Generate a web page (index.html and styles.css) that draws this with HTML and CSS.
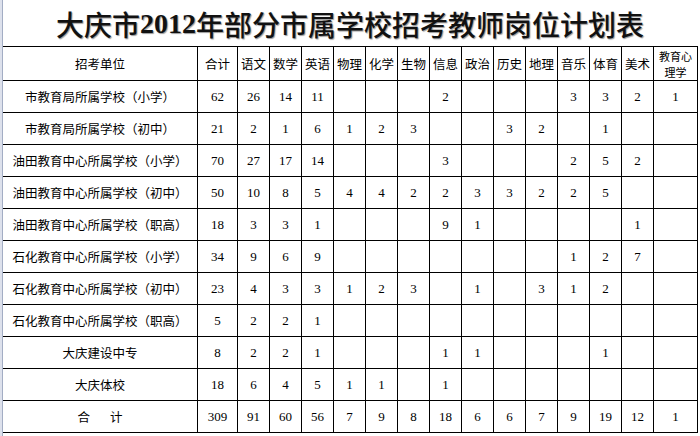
FILE: index.html
```html
<!DOCTYPE html>
<html lang="zh-CN">
<head>
<meta charset="utf-8">
<title>大庆市2012年部分市属学校招考教师岗位计划表</title>
<link rel="stylesheet" href="styles.css">
</head>
<body>
<div class="page">
  <div class="rowhead"></div>
  <div class="main">
    <h1 class="title">大庆市<span class="digits">2012</span>年部分市属学校招考教师岗位计划表</h1>
    <div class="sheet">
      <div class="c hd">招考单位</div><div class="c hd">合计</div><div class="c hd">语文</div><div class="c hd">数学</div><div class="c hd">英语</div><div class="c hd">物理</div><div class="c hd">化学</div><div class="c hd">生物</div><div class="c hd">信息</div><div class="c hd">政治</div><div class="c hd">历史</div><div class="c hd">地理</div><div class="c hd">音乐</div><div class="c hd">体育</div><div class="c hd">美术</div><div class="c hd two"><span>教育心</span><span>理学</span></div>

      <div class="c lb">市教育局所属学校（小学）</div><div class="c n">62</div><div class="c n">26</div><div class="c n">14</div><div class="c n">11</div><div class="c n"></div><div class="c n"></div><div class="c n"></div><div class="c n">2</div><div class="c n"></div><div class="c n"></div><div class="c n"></div><div class="c n">3</div><div class="c n">3</div><div class="c n">2</div><div class="c n">1</div>

      <div class="c lb">市教育局所属学校（初中）</div><div class="c n">21</div><div class="c n">2</div><div class="c n">1</div><div class="c n">6</div><div class="c n">1</div><div class="c n">2</div><div class="c n">3</div><div class="c n"></div><div class="c n"></div><div class="c n">3</div><div class="c n">2</div><div class="c n"></div><div class="c n">1</div><div class="c n"></div><div class="c n"></div>

      <div class="c lb">油田教育中心所属学校（小学）</div><div class="c n">70</div><div class="c n">27</div><div class="c n">17</div><div class="c n">14</div><div class="c n"></div><div class="c n"></div><div class="c n"></div><div class="c n">3</div><div class="c n"></div><div class="c n"></div><div class="c n"></div><div class="c n">2</div><div class="c n">5</div><div class="c n">2</div><div class="c n"></div>

      <div class="c lb">油田教育中心所属学校（初中）</div><div class="c n">50</div><div class="c n">10</div><div class="c n">8</div><div class="c n">5</div><div class="c n">4</div><div class="c n">4</div><div class="c n">2</div><div class="c n">2</div><div class="c n">3</div><div class="c n">3</div><div class="c n">2</div><div class="c n">2</div><div class="c n">5</div><div class="c n"></div><div class="c n"></div>

      <div class="c lb">油田教育中心所属学校（职高）</div><div class="c n">18</div><div class="c n">3</div><div class="c n">3</div><div class="c n">1</div><div class="c n"></div><div class="c n"></div><div class="c n"></div><div class="c n">9</div><div class="c n">1</div><div class="c n"></div><div class="c n"></div><div class="c n"></div><div class="c n"></div><div class="c n">1</div><div class="c n"></div>

      <div class="c lb">石化教育中心所属学校（小学）</div><div class="c n">34</div><div class="c n">9</div><div class="c n">6</div><div class="c n">9</div><div class="c n"></div><div class="c n"></div><div class="c n"></div><div class="c n"></div><div class="c n"></div><div class="c n"></div><div class="c n"></div><div class="c n">1</div><div class="c n">2</div><div class="c n">7</div><div class="c n"></div>

      <div class="c lb">石化教育中心所属学校（初中）</div><div class="c n">23</div><div class="c n">4</div><div class="c n">3</div><div class="c n">3</div><div class="c n">1</div><div class="c n">2</div><div class="c n">3</div><div class="c n"></div><div class="c n">1</div><div class="c n"></div><div class="c n">3</div><div class="c n">1</div><div class="c n">2</div><div class="c n"></div><div class="c n"></div>

      <div class="c lb">石化教育中心所属学校（职高）</div><div class="c n">5</div><div class="c n">2</div><div class="c n">2</div><div class="c n">1</div><div class="c n"></div><div class="c n"></div><div class="c n"></div><div class="c n"></div><div class="c n"></div><div class="c n"></div><div class="c n"></div><div class="c n"></div><div class="c n"></div><div class="c n"></div><div class="c n"></div>

      <div class="c lb">大庆建设中专</div><div class="c n">8</div><div class="c n">2</div><div class="c n">2</div><div class="c n">1</div><div class="c n"></div><div class="c n"></div><div class="c n"></div><div class="c n">1</div><div class="c n">1</div><div class="c n"></div><div class="c n"></div><div class="c n"></div><div class="c n">1</div><div class="c n"></div><div class="c n"></div>

      <div class="c lb">大庆体校</div><div class="c n">18</div><div class="c n">6</div><div class="c n">4</div><div class="c n">5</div><div class="c n">1</div><div class="c n">1</div><div class="c n"></div><div class="c n">1</div><div class="c n"></div><div class="c n"></div><div class="c n"></div><div class="c n"></div><div class="c n"></div><div class="c n"></div><div class="c n"></div>

      <div class="c lb total"><span>合</span><span>计</span></div><div class="c n">309</div><div class="c n">91</div><div class="c n">60</div><div class="c n">56</div><div class="c n">7</div><div class="c n">9</div><div class="c n">8</div><div class="c n">18</div><div class="c n">6</div><div class="c n">6</div><div class="c n">7</div><div class="c n">9</div><div class="c n">19</div><div class="c n">12</div><div class="c n">1</div>
    </div>
  </div>
</div>
</body>
</html>
```

FILE: styles.css
```css
html, body {
  margin: 0;
  padding: 0;
  background: #ffffff;
}

.page {
  display: flex;
  width: 700px;
  height: 436px;
  overflow: hidden;
  background: #ffffff;
}

.rowhead {
  width: 2px;
  flex: none;
  background: #dde1ec;
  border-right: 1px solid #a3adc4;
}

.main {
  flex: none;
  width: 697px;
}

.title {
  margin: 0;
  height: 46px;
  display: flex;
  align-items: center;
  justify-content: center;
  font-family: "Noto Sans CJK SC", "Noto Sans CJK JP", sans-serif;
  font-size: 28px;
  font-weight: 500;
  color: #111;
  text-shadow: 1px 1px 1px #9a9a9a;
  box-sizing: border-box;
  padding-top: 2px;
  padding-right: 3px;
}

.digits {
  font-family: "Liberation Serif", serif;
  font-weight: 700;
}

.sheet {
  display: grid;
  grid-template-columns: 194px 39px repeat(13, 31px) 43px;
  grid-template-rows: 33px repeat(11, 31px);
  gap: 1px;
  width: max-content;
  background: #000;
  border-top: 1px solid #000;
  border-right: 1px solid #000;
  border-bottom: 1px solid #000;
}

.c {
  background: #fff;
  display: flex;
  align-items: center;
  justify-content: center;
  color: #000;
  white-space: nowrap;
}

.hd, .lb {
  font-family: "Noto Sans CJK SC", "Noto Sans CJK JP", sans-serif;
  font-size: 12.5px;
  line-height: 14px;
}

.two {
  flex-direction: column;
  font-size: 11px;
}

.two span {
  display: block;
  line-height: 16px;
  height: 16px;
}

.n {
  font-family: "Liberation Serif", serif;
  font-size: 13px;
  padding-top: 1px;
}

.total {
  gap: 20px;
}
```
